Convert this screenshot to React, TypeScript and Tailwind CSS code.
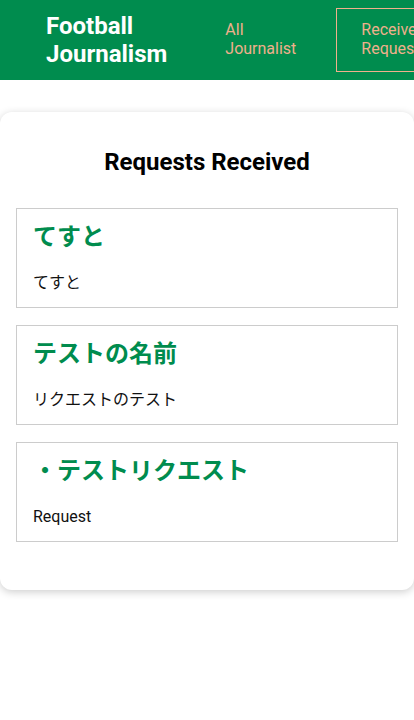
import React from "react";

const items = [
  { title: "てすと", body: "てすと" },
  { title: "テストの名前", body: "リクエストのテスト" },
  { title: "・テストリクエスト", body: "Request" },
];

export default function App() {
  return (
    <div
      className="min-h-[720px] w-[414px] overflow-hidden bg-white text-black"
      style={{ fontFamily: 'Roboto, "Noto Sans CJK JP", sans-serif' }}
    >
      <header className="flex h-[80px] items-center overflow-hidden bg-[#008c4e]">
        <div className="ml-[46px] w-min shrink-0 text-[24px] font-bold leading-[28px] text-white">
          Football Journalism
        </div>
        <a className="ml-[58px] w-min shrink-0 text-[16px] leading-[18.75px] text-[#efb08c]">
          All Journalist
        </a>
        <a className="ml-[40px] w-min shrink-0 border border-[#efb08c] px-6 py-3 text-[16px] leading-[18.75px] text-[#efb08c]">
          Received Requests
        </a>
      </header>
      <main className="pt-[32px]">
        <section className="rounded-xl bg-white px-4 pb-[48px] pt-[36px] shadow-[0_2px_8px_rgba(0,0,0,0.2)]">
          <h2 className="text-center text-[24px] font-bold leading-[28px]">
            Requests Received
          </h2>
          <div className="mt-[32px] flex flex-col gap-[17px]">
            {items.map((it) => (
              <div
                key={it.title}
                className="border border-[#cccccc] px-4 pb-[14px] pt-[14px]"
              >
                <div className="text-[24px] font-bold leading-[28px] text-[#008c4e]">
                  {it.title}
                </div>
                <div className="mt-[22px] text-[16px] leading-[20px] text-[#111]">
                  {it.body}
                </div>
              </div>
            ))}
          </div>
        </section>
      </main>
    </div>
  );
}
